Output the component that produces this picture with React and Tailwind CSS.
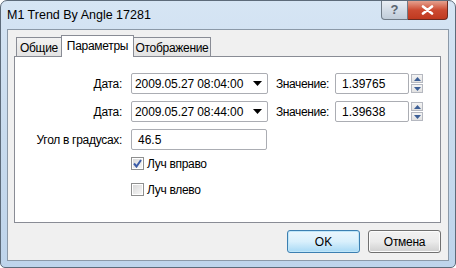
import React, { useState } from 'react';

const Spinner = () => (
  <div className="flex flex-col gap-[1px] ml-[2px] w-[12px] h-[21px] py-[1px]">
    <div className="flex-1 flex items-center justify-center border border-[#b5b8c0] bg-gradient-to-b from-[#f4f4f4] to-[#e2e2e2]">
      <svg width="7" height="4" viewBox="0 0 7 4"><path d="M3.5 0 L7 4 L0 4 Z" fill="#3d5f96" /></svg>
    </div>
    <div className="flex-1 flex items-center justify-center border border-[#b5b8c0] bg-gradient-to-b from-[#f4f4f4] to-[#e2e2e2]">
      <svg width="7" height="4" viewBox="0 0 7 4"><path d="M0 0 L7 0 L3.5 4 Z" fill="#3d5f96" /></svg>
    </div>
  </div>
);

const DateRow = ({ date, value }) => (
  <div className="flex items-center h-[21px]">
    <div className="w-[108px] text-right pr-[1px] tracking-[-0.3px]">Дата:</div>
    <div className="ml-[8px] w-[137px] h-[21px] border border-[#abadb3] rounded-[2px] bg-white flex items-center pl-[3px] pr-[5px]">
      <span className="flex-1 tracking-[-0.1px]">{date}</span>
      <svg width="9" height="5" viewBox="0 0 9 5"><path d="M0 0 L9 0 L4.5 5 Z" fill="#000" /></svg>
    </div>
    <div className="ml-[8px] w-[59px] tracking-[-0.4px]">Значение:</div>
    <div className="w-[74px] h-[21px] border border-[#abadb3] rounded-[2px] bg-white flex items-center pl-[6px]">{value}</div>
    <Spinner />
  </div>
);

const Check = ({ checked, label, onClick }) => (
  <div className="flex items-center h-[13px] cursor-default" onClick={onClick}>
    <div className="w-[13px] h-[13px] border border-[#8e8f8f] bg-white p-[1px]">
      <div className="w-full h-full bg-gradient-to-br from-[#d9d9d9] to-[#f7f7f7] flex items-center justify-center">
        {checked && (
          <svg width="9" height="9" viewBox="0 0 9 9"><path d="M1 4.5 L3.5 7.5 L8 1" stroke="#3b5ca8" strokeWidth="2" fill="none" /></svg>
        )}
      </div>
    </div>
    <span className="ml-[3px] tracking-[-0.3px]">{label}</span>
  </div>
);

const App = () => {
  const [right, setRight] = useState(true);
  const [left, setLeft] = useState(false);

  return (
    <div className="w-[456px] h-[268px] bg-white">
      <div className="w-[456px] h-[268px] flex flex-col border border-[#5d6b7a] rounded-t-[7px] rounded-b-[5px] bg-gradient-to-b from-[#d6e5f4] via-[#c8dbee] to-[#bed4eb] font-['Segoe_UI','Liberation_Sans',sans-serif] text-[12px] text-black overflow-hidden">
        <div className="h-[28px] flex items-start">
          <div className="pl-[6px] pt-[6px] text-[12.5px] leading-[16px]">M1 Trend By Angle 17281</div>
          <div className="ml-auto mr-[7px] flex">
            <div className="w-[27px] h-[19px] border border-[#6f7a86] border-t-0 rounded-bl-[4px] bg-gradient-to-b from-[#e9eef4] via-[#d3dce6] to-[#c0ccd9] flex items-center justify-center text-[13px] font-bold text-[#5a6470]">?</div>
            <div className="w-[40px] h-[19px] border border-[#6b2a20] border-t-0 border-l-0 rounded-br-[4px] bg-gradient-to-b from-[#e4a08e] via-[#cc4a31] to-[#c0391f] flex items-center justify-center">
              <svg width="13" height="10" viewBox="0 0 13 10"><path d="M2 1.5 L11 8.5 M11 1.5 L2 8.5" stroke="#fff" strokeWidth="2.6" strokeLinecap="round" /></svg>
            </div>
          </div>
        </div>
        <div className="mx-[6px] h-[232px] border border-[#8b99a8] bg-[#f0f0f0] flex flex-col">
          <div className="pl-[6px] pr-[7px] pt-[5px]">
            <div className="flex items-end h-[21px] pl-[2px] tracking-[-0.3px]">
              <div className="w-[46px] h-[19px] border border-b-0 border-[#898c95] bg-gradient-to-b from-[#f2f2f2] to-[#e3e3e3] flex items-center justify-center pt-[1px]">Общие</div>
              <div className="-ml-[1px] w-[73px] h-[22px] -mb-[1px] border border-b-0 border-[#898c95] bg-white flex items-center justify-center z-10 pb-[2px]">Параметры</div>
              <div className="-ml-[1px] w-[78px] h-[19px] border border-b-0 border-[#898c95] bg-gradient-to-b from-[#f2f2f2] to-[#e3e3e3] flex items-center justify-center pt-[1px]">Отображение</div>
            </div>
            <div className="h-[167px] border border-[#898c95] bg-white pt-[16px] flex flex-col">
              <div className="flex flex-col gap-[7px]">
                <DateRow date="2009.05.27 08:04:00" value="1.39765" />
                <DateRow date="2009.05.27 08:44:00" value="1.39638" />
                <div className="flex items-center h-[21px]">
                  <div className="w-[108px] text-right pr-[1px] tracking-[-0.3px]">Угол в градусах:</div>
                  <div className="ml-[8px] w-[136px] h-[21px] border border-[#abadb3] rounded-[2px] bg-white flex items-center pl-[6px]">46.5</div>
                </div>
              </div>
              <div className="mt-[7px] pl-[116px] flex flex-col gap-[13px]">
                <Check checked={right} label="Луч вправо" onClick={() => setRight(!right)} />
                <Check checked={left} label="Луч влево" onClick={() => setLeft(!left)} />
              </div>
            </div>
          </div>
          <div className="flex justify-end gap-[8px] pr-[7px] pt-[7px]">
            <button className="w-[73px] h-[23px] border border-[#3c7fb1] rounded-[3px] bg-gradient-to-b from-[#eaf6fd] via-[#d9f0fc] to-[#a7d9f5] shadow-[inset_0_0_0_1px_#bfe6f9]">OK</button>
            <button className="w-[73px] h-[23px] border border-[#707070] rounded-[3px] bg-gradient-to-b from-[#f2f2f2] via-[#ebebeb] to-[#cfcfcf] shadow-[inset_0_0_0_1px_#fcfcfc] tracking-[-0.3px]">Отмена</button>
          </div>
        </div>
      </div>
    </div>
  );
};

export default App;
